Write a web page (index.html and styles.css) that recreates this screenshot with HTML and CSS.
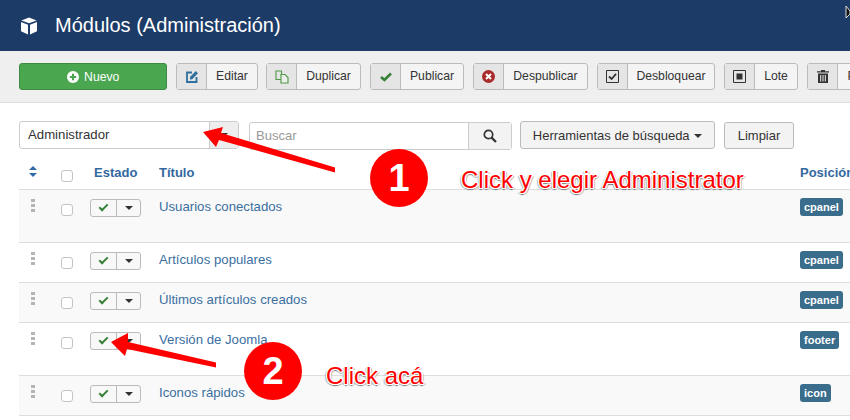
FILE: index.html
```html
<!DOCTYPE html>
<html lang="es">
  <head>
    <meta charset="UTF-8" />
    <title>Módulos (Administración)</title>
    <link rel="stylesheet" href="styles.css">
  </head>
  <body>
    <div class="page">
      <header class="header">
        <svg class="cube" viewBox="0 0 18 18" width="18" height="18">
          <path fill="#fff" d="M9 0.5 16.6 3.4 9 6.3 1.4 3.4Z M1 5 8 7.7V17.6L1 14.2Z M17 5 10 7.7V17.6L17 14.2Z" />
        </svg>
        <h1>Módulos (Administración)</h1>
        <svg class="cursor" viewBox="0 0 6 14" width="6" height="14">
          <path fill="#111" stroke="#ddd" d="M1 1 5 6V9L1 13Z" />
        </svg>
      </header>

      <div class="toolbar">
        <button class="btn-new">
          <svg viewBox="0 0 12 12" width="12" height="12">
            <circle cx="6" cy="6" r="6" fill="#fff" />
            <path d="M6 2.8V9.2M2.8 6H9.2" stroke="#4aa64f" stroke-width="2" />
          </svg>
          Nuevo
        </button>
        <div class="tool w-editar">
          <span class="tool-icon">
            <svg viewBox="0 0 14 14" width="14" height="14">
              <path fill="none" stroke="#2f6f9f" stroke-width="1.8" d="M7 2.5H2V12H11.5V7" />
              <path fill="#2f6f9f" d="M5 7 10.8 1 13 3.2 7.2 9.2 5 9.5Z" />
            </svg>
          </span>
          <span class="tool-label">Editar</span>
        </div>
        <div class="tool w-duplicar">
          <span class="tool-icon">
            <svg viewBox="0 0 14 14" width="14" height="14">
              <path fill="none" stroke="#4f9a45" stroke-width="1.1" d="M1 1H6.5V9.5H1Z" />
              <path fill="#eee" stroke="#4f9a45" stroke-width="1.1" d="M6 4.5H10L13 7.5V13H6Z" />
            </svg>
          </span>
          <span class="tool-label">Duplicar</span>
        </div>
        <div class="tool w-publicar">
          <span class="tool-icon">
            <svg viewBox="0 0 12 10" width="12" height="10">
              <path fill="none" stroke="#378137" stroke-width="2.6" d="M1 5 4.4 8 11 1.5" />
            </svg>
          </span>
          <span class="tool-label">Publicar</span>
        </div>
        <div class="tool w-despublicar">
          <span class="tool-icon">
            <svg viewBox="0 0 13 13" width="13" height="13">
              <circle cx="6.5" cy="6.5" r="6.5" fill="#a92b2b" />
              <path d="M4 4 9 9M9 4 4 9" stroke="#fff" stroke-width="2" />
            </svg>
          </span>
          <span class="tool-label">Despublicar</span>
        </div>
        <div class="tool w-desbloquear">
          <span class="tool-icon">
            <svg viewBox="0 0 13 13" width="13" height="13">
              <path fill="none" stroke="#333" d="M0.5 0.5H12.5V12.5H0.5Z" />
              <path fill="none" stroke="#333" stroke-width="1.8" d="M3 6.5 5.6 9 10 3.8" />
            </svg>
          </span>
          <span class="tool-label">Desbloquear</span>
        </div>
        <div class="tool w-lote">
          <span class="tool-icon">
            <svg viewBox="0 0 13 13" width="13" height="13">
              <path fill="none" stroke="#333" d="M0.5 0.5H12.5V12.5H0.5Z" />
              <path fill="#333" d="M3.5 3.5H9.5V9.5H3.5Z" />
            </svg>
          </span>
          <span class="tool-label">Lote</span>
        </div>
        <div class="tool w-papelera">
          <span class="tool-icon">
            <svg viewBox="0 0 12 13" width="12" height="13">
              <path fill="#333" d="M4 0H8V1.2H12V2.6H0V1.2H4Z M1 3.6H11V13H1Z" />
              <path stroke="#eee" d="M3.7 5V11.5M6 5V11.5M8.3 5V11.5" />
            </svg>
          </span>
          <span class="tool-label">Papelera</span>
        </div>
      </div>

      <div class="filters">
        <div class="select">
          <span class="select-value">Administrador</span>
          <span class="select-arrow"><i class="caret"></i></span>
        </div>
        <div class="search">
          <span class="search-input">Buscar</span>
          <span class="search-btn">
            <svg viewBox="0 0 14 14" width="14" height="14">
              <circle cx="5.5" cy="5.5" r="4.2" fill="none" stroke="#333" stroke-width="1.7" />
              <path d="M8.6 8.6 13 13" stroke="#333" stroke-width="2.2" />
            </svg>
          </span>
        </div>
        <button class="btn-tools">Herramientas de búsqueda <i class="caret"></i></button>
        <button class="btn-clear">Limpiar</button>
      </div>

      <div class="table">
        <div class="row head">
          <span class="sort">
            <svg viewBox="0 0 8 11" width="8" height="11">
              <path fill="#2f6aa5" d="M4 0 8 4H0Z M0 7H8L4 11Z" />
            </svg>
          </span>
          <span class="check"></span>
          <span class="col-state">Estado</span>
          <span>Título</span>
          <span>Posición</span>
        </div>

        <div class="row tall odd">
          <span class="handle"><i></i></span>
          <span class="check"></span>
          <span class="toggle"><b class="ok"></b><b><i class="caret"></i></b></span>
          <a class="title">Usuarios conectados</a>
          <span><em class="badge">cpanel</em></span>
        </div>
        <div class="row">
          <span class="handle"><i></i></span>
          <span class="check"></span>
          <span class="toggle"><b class="ok"></b><b><i class="caret"></i></b></span>
          <a class="title">Artículos populares</a>
          <span><em class="badge">cpanel</em></span>
        </div>
        <div class="row odd">
          <span class="handle"><i></i></span>
          <span class="check"></span>
          <span class="toggle"><b class="ok"></b><b><i class="caret"></i></b></span>
          <a class="title">Últimos artículos creados</a>
          <span><em class="badge">cpanel</em></span>
        </div>
        <div class="row tall">
          <span class="handle"><i></i></span>
          <span class="check"></span>
          <span class="toggle"><b class="ok"></b><b><i class="caret"></i></b></span>
          <a class="title">Versión de Joomla</a>
          <span><em class="badge">footer</em></span>
        </div>
        <div class="row odd">
          <span class="handle"><i></i></span>
          <span class="check"></span>
          <span class="toggle"><b class="ok"></b><b><i class="caret"></i></b></span>
          <a class="title">Iconos rápidos</a>
          <span><em class="badge">icon</em></span>
        </div>
      </div>

      <!-- Notes drawn over the screenshot -->
      <svg class="arrow" viewBox="0 0 850 420" width="850" height="420">
        <path fill="#f00" d="M335 167.500 335 172.500 219 140 216 147 203 132 223 127 221 133Z" />
        <path fill="#f00" d="M216 362.500 216 367.500 127 349 125 356 111 342 128 333 128 342Z" />
      </svg>
      <span class="step step-one">1</span>
      <span class="step step-two">2</span>
      <span class="note note-one">Click y elegir Administrator</span>
      <span class="note note-two">Click acá</span>
    </div>
  </body>
</html>
```

FILE: styles.css
```css
body {
  font-family: "Liberation Sans", Arial, sans-serif;
  font-size: 13px;
  color: #333;
  margin: 0;
  padding: 0;
}
.page {
  position: relative;
  width: 850px;
  height: 420px;
  overflow: hidden;
  background-color: #fff;
}
.header {
  position: relative;
  display: flex;
  align-items: center;
  height: 51px;
  padding-left: 20px;
  box-sizing: border-box;
  background-color: #1c3b67;
}
.header h1 {
  margin: 0 0 0 17px;
  font-size: 20px;
  font-weight: normal;
  color: #fff;
}
.cube {
  flex: none;
}
.cursor {
  position: absolute;
  top: 5px;
  right: -1px;
}
.toolbar {
  display: flex;
  gap: 9px;
  height: 52px;
  padding: 12px 0 0 19px;
  box-sizing: border-box;
  font-size: 12.2px;
  background-color: #efefef;
  border-bottom: 1px solid #ddd;
}
.btn-new {
  flex: none;
  width: 148px;
  height: 27px;
  padding: 0;
  font: inherit;
  color: #fff;
  background-color: #4aa64f;
  border: 1px solid #3f8a43;
  border-radius: 3px;
}
.btn-new svg {
  vertical-align: -2px;
  margin-right: 2px;
}
.tool {
  flex: none;
  display: flex;
  height: 27px;
  box-sizing: border-box;
  background-color: #f4f4f4;
  border: 1px solid #bbb;
  border-radius: 3px;
}
.tool-icon {
  flex: none;
  display: flex;
  align-items: center;
  justify-content: center;
  width: 29px;
  background-color: #e5e5e5;
  border-right: 1px solid #bbb;
}
.tool-label {
  flex: 1;
  text-align: center;
  line-height: 25px;
}
.w-editar {
  width: 82px;
  margin-right: -1px;
}
.w-duplicar {
  width: 95px;
}
.w-publicar {
  width: 94px;
}
.w-despublicar {
  width: 115px;
}
.w-desbloquear {
  width: 118px;
}
.w-lote {
  width: 74px;
}
.w-papelera {
  width: 100px;
}
.filters {
  display: flex;
  align-items: flex-start;
  height: 52px;
  padding: 18px 0 0 19px;
  box-sizing: border-box;
}
.select {
  display: flex;
  width: 220px;
  height: 28px;
  box-sizing: border-box;
  border: 1px solid #ccc;
  border-radius: 3px;
}
.select-value {
  flex: 1;
  padding-left: 8px;
  font-size: 13.2px;
  line-height: 25px;
}
.select-arrow {
  display: flex;
  align-items: center;
  justify-content: center;
  width: 28px;
  background-color: #eee;
  border-left: 1px solid #ccc;
}
.caret {
  display: inline-block;
  width: 0;
  height: 0;
  border-top: 4px solid #333;
  border-left: 4px solid transparent;
  border-right: 4px solid transparent;
}
.search {
  display: flex;
  width: 263px;
  height: 28px;
  margin: 1px 0 0 10px;
  box-sizing: border-box;
  border: 1px solid #ccc;
  border-radius: 3px;
}
.search-input {
  flex: 1;
  padding-left: 6px;
  line-height: 26px;
  color: #999;
}
.search-btn {
  display: flex;
  align-items: center;
  justify-content: center;
  width: 42px;
  background-color: #f3f3f3;
  border-left: 1px solid #ccc;
}
.btn-tools,
.btn-clear {
  height: 28px;
  padding: 0;
  font: inherit;
  color: #333;
  background-color: #f3f3f3;
  border: 1px solid #bbb;
  border-radius: 3px;
}
.btn-tools {
  width: 195px;
  margin-left: 8px;
}
.btn-tools .caret {
  margin-left: 1px;
  vertical-align: 2px;
}
.btn-clear {
  width: 70px;
  margin: 1px 0 0 9px;
  height: 27px;
}
.table {
  margin-left: 19px;
}
.row {
  display: grid;
  grid-template-columns: 42px 29px 69px 641px 100px;
  width: 881px;
  height: 40px;
  padding-top: 9px;
  box-sizing: border-box;
  border-bottom: 1px solid #ddd;
}
.tall {
  height: 53px;
}
.odd {
  background-color: #f9f9f9;
}
.head {
  height: 35px;
  padding-top: 10px;
  font-weight: bold;
  color: #33689f;
}
.col-state {
  padding-left: 4px;
}
.sort {
  padding-left: 10px;
}
.handle i {
  display: block;
  width: 4px;
  height: 13px;
  margin-left: 12px;
  background-image: linear-gradient(#b5b5b5 3px, transparent 3px);
  background-size: 4px 5px;
}
.check::before {
  content: "";
  display: block;
  width: 12px;
  height: 12px;
  margin-top: 5px;
  background-color: #fff;
  border: 1px solid #c4c4c4;
  border-radius: 3px;
  box-sizing: border-box;
}
.toggle {
  display: flex;
  width: 51px;
  height: 18px;
  box-sizing: border-box;
  background-color: #f8f8f8;
  border: 1px solid #bbb;
  border-radius: 3px;
}
.toggle b {
  display: flex;
  align-items: center;
  justify-content: center;
  flex: 1;
}
.toggle .ok {
  flex: none;
  width: 25px;
  border-right: 1px solid #bbb;
}
.toggle .ok::before {
  content: "";
  width: 7px;
  height: 3px;
  margin-top: -3px;
  border-left: 2.6px solid #378137;
  border-bottom: 2.6px solid #378137;
  transform: rotate(-45deg);
}
.title {
  font-size: 13.2px;
  line-height: 15px;
  color: #3a6f9f;
}
.badge {
  display: inline-block;
  height: 18px;
  margin-top: -1px;
  padding: 0 4px;
  font-size: 11px;
  font-style: normal;
  font-weight: bold;
  line-height: 18px;
  vertical-align: top;
  color: #fff;
  background-color: #3a6d8c;
  border-radius: 3px;
}
.arrow {
  position: absolute;
  top: 0;
  left: 0;
}
.step {
  position: absolute;
  width: 58px;
  height: 58px;
  font-size: 38px;
  font-weight: bold;
  line-height: 58px;
  text-align: center;
  color: #fff;
  background-color: #f00;
  border-radius: 50%;
}
.step-one {
  top: 149px;
  left: 370px;
}
.step-two {
  top: 342px;
  left: 244px;
}
.note {
  position: absolute;
  font-size: 24px;
  line-height: 28px;
  white-space: nowrap;
  color: #f00;
  text-shadow: 1px 0 0 #fff, -1px 0 0 #fff, 0 1px 0 #fff, 0 -1px 0 #fff, 1px 1px 0 #fff, -1px 1px 0 #fff, 1px -1px 0 #fff, -1px -1px 0 #fff, 0 2px 1px #777, 2px 1px 1px #aaa, -2px 1px 1px #aaa;
}
.note-one {
  top: 166px;
  left: 461px;
}
.note-two {
  top: 362px;
  left: 326px;
}
```
